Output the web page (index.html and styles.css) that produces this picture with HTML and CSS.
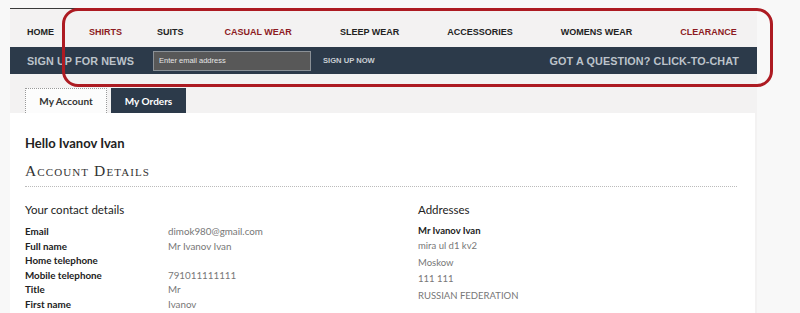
FILE: index.html
```html
<!DOCTYPE html>
<html>
<head>
    <meta charset="UTF-8" />
    <title>My Account</title>
    <link rel="stylesheet" href="styles.css">
</head>

<body>
    <div class="page">
        <ul class="main-nav">
            <li><a href="#">HOME</a></li>
            <li><a href="#" class="hot">SHIRTS</a></li>
            <li class="narrow"><a href="#">SUITS</a></li>
            <li><a href="#" class="hot">CASUAL WEAR</a></li>
            <li><a href="#">SLEEP WEAR</a></li>
            <li><a href="#">ACCESSORIES</a></li>
            <li><a href="#">WOMENS WEAR</a></li>
            <li><a href="#" class="hot">CLEARANCE</a></li>
        </ul>

        <div class="news-bar">
            <span class="news-title">SIGN UP FOR NEWS</span>
            <input type="text" class="news-input" placeholder="Enter email address">
            <a href="#" class="news-btn">SIGN UP NOW</a>
            <span class="chat-link">GOT A QUESTION? CLICK-TO-CHAT</span>
        </div>

        <div class="tabs">
            <a href="#" class="tab active">My Account</a>
            <a href="#" class="tab">My Orders</a>
        </div>

        <div class="account-panel">
            <h2 class="hello">Hello Ivanov Ivan</h2>
            <h1 class="section-title">Account Details</h1>

            <div class="details-grid">
                <div class="contact">
                    <h3 class="block-title">Your contact details</h3>
                    <dl class="contact-list">
                        <dt>Email</dt><dd>dimok980@gmail.com</dd>
                        <dt>Full name</dt><dd>Mr Ivanov Ivan</dd>
                        <dt>Home telephone</dt><dd></dd>
                        <dt>Mobile telephone</dt><dd>791011111111</dd>
                        <dt>Title</dt><dd>Mr</dd>
                        <dt>First name</dt><dd>Ivanov</dd>
                    </dl>
                </div>

                <div class="addresses">
                    <h3 class="block-title">Addresses</h3>
                    <div class="addr-name">Mr Ivanov Ivan</div>
                    <div class="addr-line">mira ul d1 kv2</div>
                    <div class="addr-line">Moskow</div>
                    <div class="addr-line">111 111</div>
                    <div class="addr-line">RUSSIAN FEDERATION</div>
                </div>
            </div>
        </div>

        <!-- highlight drawn over the header -->
        <div class="highlight"></div>
    </div>
</body>
</html>
```

FILE: styles.css
```css
* {
    margin: 0;
    padding: 0;
    box-sizing: border-box;
}

body {
    background: #f8f8f8;
    font-family: "Lato", "Open Sans", sans-serif;
    height: 313px;
    overflow: hidden;
}

.page {
    position: relative;
    margin: 8px 0 0 10px;
    width: 747px;
    background-color: #f3f2f2;
    border-top: 1px solid #3a3a3a;
}

/* top navigation */
.main-nav {
    list-style: none;
    display: flex;
    align-items: center;
    gap: 48px;
    height: 38px;
    padding: 0 0 0 17px;
}

.main-nav li:nth-child(-n+2) {
    margin-right: -13px;
}

.main-nav li.narrow {
    margin-right: -7px;
}

.main-nav a {
    font-family: "Liberation Sans", Arial, sans-serif;
    font-size: 9px;
    font-weight: 700;
    color: #222;
    text-decoration: none;
}

.main-nav a.hot {
    color: #8c1a22;
}

/* newsletter bar */
.news-bar {
    display: flex;
    align-items: center;
    height: 27px;
    padding: 0 18px 0 17px;
    background-color: #2c3a4a;
    font-family: "Liberation Sans", Arial, sans-serif;
}

.news-title,
.chat-link {
    font-size: 10.8px;
    font-weight: 700;
    color: #bcc3ca;
    letter-spacing: 0.1px;
}

.news-input {
    width: 158px;
    height: 20px;
    margin-left: 19px;
    padding: 0 5px;
    background-color: #585858;
    border: 1px solid #8a9096;
    color: #fff;
    font-family: "Liberation Sans", Arial, sans-serif;
    font-size: 7.5px;
    outline: none;
}

.news-input::placeholder {
    color: #e6e6e6;
}

.news-btn {
    margin-left: 12px;
    font-size: 7.6px;
    font-weight: 700;
    color: #c9ced3;
    text-decoration: none;
}

.chat-link {
    margin-left: auto;
}

/* tabs */
.tabs {
    display: flex;
    gap: 4px;
    padding: 14px 0 0 15px;
}

.tab {
    display: flex;
    align-items: center;
    justify-content: center;
    height: 25px;
    font-size: 10px;
    font-weight: 700;
    text-decoration: none;
    color: #fff;
    background-color: #2c3a4a;
    width: 75px;
}

.tab.active {
    width: 82px;
    color: #333;
    background-color: #fcfcfc;
    border: 1px dotted #999;
    border-bottom: none;
}

/* account panel */
.account-panel {
    margin-right: 2px;
    padding: 21px 18px 0 15px;
    background-color: #fff;
    height: 200px;
}

.hello {
    font-size: 13px;
    font-weight: 700;
    color: #222;
    line-height: 18px;
}

.section-title {
    margin-top: 10px;
    padding-bottom: 6px;
    border-bottom: 1px dotted #bbb;
    font-family: "Liberation Serif", serif;
    font-variant: small-caps;
    font-weight: 400;
    font-size: 15.5px;
    letter-spacing: 1.1px;
    line-height: 18px;
    color: #333;
}

.details-grid {
    display: grid;
    grid-template-columns: 393px 1fr;
    padding-top: 15px;
}

.block-title {
    font-size: 11.5px;
    font-weight: 400;
    color: #222;
    line-height: 16px;
    margin-bottom: 6px;
}

.contact-list {
    display: grid;
    grid-template-columns: 143px 1fr;
    font-size: 9.8px;
    line-height: 14.6px;
}

.contact-list dt {
    font-weight: 700;
    color: #222;
}

.contact-list dd {
    color: #777;
}

.addr-name {
    margin-top: 5px;
    font-size: 9.5px;
    font-weight: 700;
    color: #222;
    line-height: 14px;
}

.addr-line {
    font-size: 9.5px;
    color: #777;
    line-height: 16.5px;
}

/* red annotation frame */
.highlight {
    position: absolute;
    top: -1px;
    left: 52px;
    width: 711px;
    height: 79px;
    border: 3px solid #ad1b22;
    border-radius: 16px;
    pointer-events: none;
}
```
